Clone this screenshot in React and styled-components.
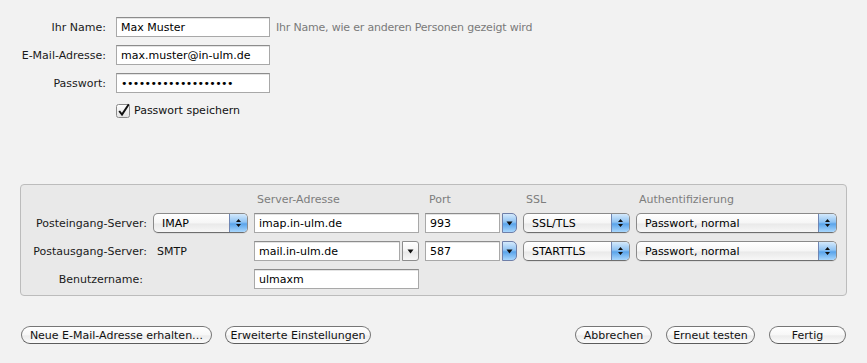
import React from 'react'
import styled, { createGlobalStyle } from 'styled-components'

const Global = createGlobalStyle`
  html, body {
    margin: 0;
    background: #f2f2f2;
  }
  body {
    font-family: "DejaVu Sans", "Noto Sans", sans-serif;
    font-size: 11px;
    color: #1a1a1a;
  }
`

const Page = styled.div`
  width: 867px;
  height: 363px;
  box-sizing: border-box;
  padding-top: 17px;
  overflow: hidden;
`

const Form = styled.section`
  display: grid;
  grid-template-columns: 110px 154px auto;
  grid-auto-rows: 20px;
  column-gap: 6px;
  row-gap: 8px;
  align-items: center;
`

const Label = styled.div`
  text-align: right;
  padding-right: ${p => p.$pad ?? 4}px;
  white-space: nowrap;
`

const Field = styled.div`
  box-sizing: border-box;
  height: 20px;
  background: #fff;
  border: 1px solid #a8a8a8;
  border-top-color: #8c8c8c;
  box-shadow: inset 0 1px 0 #e4e4e4;
  padding-left: 4px;
  display: flex;
  align-items: center;
  color: #000;
  white-space: nowrap;
  overflow: hidden;
  flex: 1;
  letter-spacing: ${p => p.$dots ? '-0.6px' : 'normal'};
`

const Hint = styled.div`
  color: #7a7a7a;
  white-space: nowrap;
  letter-spacing: -0.2px;
`

const CheckRow = styled.label`
  grid-column: 2 / span 2;
  display: flex;
  align-items: center;
  gap: 3px;
  margin-top: -2px;
  color: #111;
`

const Panel = styled.section`
  margin: 63px 20px 0 20px;
  border: 1px solid #bcbcbc;
  border-radius: 4px;
  background: #e9e9e9;
  padding: 9px 0 6px 0;
  display: grid;
  grid-template-columns: 126px 95px 165px 92px 107px 201px;
  grid-template-rows: 11px 20px 20px 20px;
  column-gap: 6px;
  row-gap: 8px;
  align-items: center;
`

const ColHead = styled.div`
  grid-column: ${p => p.$col};
  color: #7d7d7d;
  padding-left: ${p => p.$pad || 3}px;
  line-height: 11px;
  white-space: nowrap;
`

const Plain = styled.div`
  padding-left: 4px;
  color: #111;
`

const PopupBox = styled.div`
  box-sizing: border-box;
  height: 20px;
  display: flex;
  border: 1px solid #8a8a8a;
  border-bottom-color: #6e6e6e;
  border-radius: 5px;
  overflow: hidden;
  background: linear-gradient(#ffffff, #f6f6f6 50%, #e9e9e9 55%, #f7f7f7);
  box-shadow: 0 1px 0 rgba(0, 0, 0, 0.06);
`

const PopupText = styled.div`
  flex: 1;
  display: flex;
  align-items: center;
  padding-left: 8px;
  color: #000;
  white-space: nowrap;
`

const BlueKnob = styled.div`
  width: 17px;
  display: flex;
  align-items: center;
  justify-content: center;
  border-left: 1px solid #6f86b3;
  background: linear-gradient(#d4e9fc, #8fc3f3 45%, #5aa4ea 55%, #a9d7fd);
  svg { fill: #111; }
`

const ComboBox = styled.div`
  display: flex;
  height: 20px;
`

const ComboKnob = styled.div`
  box-sizing: border-box;
  width: ${p => p.$w}px;
  height: 20px;
  margin-left: 2px;
  display: flex;
  align-items: center;
  justify-content: center;
  border: 1px solid ${p => p.$blue ? '#6f7fa8' : '#8d8d8d'};
  border-radius: ${p => p.$blue ? '0 5px 5px 0' : '0 3px 3px 0'};
  background: ${p => p.$blue
    ? 'linear-gradient(#d4e9fc, #8fc3f3 45%, #5aa4ea 55%, #a9d7fd)'
    : 'linear-gradient(#ffffff, #f3f3f3 50%, #e8e8e8 55%, #f8f8f8)'};
  svg { fill: #111; }
`

const ButtonBar = styled.footer`
  display: flex;
  justify-content: space-between;
  margin: 30px 21px 0 21px;
`

const Group = styled.div`
  display: flex;
  gap: ${p => p.$gap}px;
`

const Button = styled.button`
  box-sizing: border-box;
  width: ${p => p.$w}px;
  height: 18px;
  padding: 0;
  border: 1px solid #767676;
  border-bottom-color: #5c5c5c;
  border-radius: 9px;
  background: linear-gradient(#ffffff, #f7f7f7 50%, #ececec 55%, #fbfbfb);
  font-family: inherit;
  font-size: 11px;
  color: #111;
  white-space: nowrap;
`

const UpDown = () =>
  <svg width="7" height="10" viewBox="0 0 7 10">
    <path d="M1 4 L3.5 1 L6 4 Z M1 6 L3.5 9 L6 6 Z" />
  </svg>

const Down = () =>
  <svg width="7" height="5" viewBox="0 0 7 5">
    <path d="M0.5 0.5 H6.5 L3.5 4.5 Z" />
  </svg>

const Check = () =>
  <svg width="15" height="15" viewBox="0 0 15 15">
    <defs>
      <linearGradient id="cb" x1="0" y1="0" x2="0" y2="1">
        <stop offset="0" stopColor="#ffffff" />
        <stop offset="1" stopColor="#e2e2e2" />
      </linearGradient>
    </defs>
    <rect x="0.5" y="1.5" width="13" height="13" rx="2" fill="url(#cb)" stroke="#8a8a8a" />
    <path d="M3.2 8 L6 11.5 L12.8 1.2" fill="none" stroke="#111" strokeWidth="2" />
  </svg>

const Popup = ({ children }) =>
  <PopupBox>
    <PopupText>{children}</PopupText>
    <BlueKnob><UpDown /></BlueKnob>
  </PopupBox>

const Combo = ({ value, blue }) =>
  <ComboBox>
    <Field>{value}</Field>
    <ComboKnob $blue={blue} $w={blue ? 15 : 17}><Down /></ComboKnob>
  </ComboBox>

const App = () =>
  <Page>
    <Global />
    <Form>
      <Label>Ihr Name:</Label>
      <Field>Max Muster</Field>
      <Hint>Ihr Name, wie er anderen Personen gezeigt wird</Hint>

      <Label>E-Mail-Adresse:</Label>
      <Field>max.muster@in-ulm.de</Field>
      <div />

      <Label>Passwort:</Label>
      <Field $dots>{'•'.repeat(19)}</Field>
      <div />

      <CheckRow><Check />Passwort speichern</CheckRow>
    </Form>

    <Panel>
      <ColHead $col={3}>Server-Adresse</ColHead>
      <ColHead $col={4} $pad={4}>Port</ColHead>
      <ColHead $col={5}>SSL</ColHead>
      <ColHead $col={6}>Authentifizierung</ColHead>

      <Label $pad={0}>Posteingang-Server:</Label>
      <Popup>IMAP</Popup>
      <Field>imap.in-ulm.de</Field>
      <Combo value="993" blue />
      <Popup>SSL/TLS</Popup>
      <Popup>Passwort, normal</Popup>

      <Label $pad={0}>Postausgang-Server:</Label>
      <Plain>SMTP</Plain>
      <Combo value="mail.in-ulm.de" />
      <Combo value="587" blue />
      <Popup>STARTTLS</Popup>
      <Popup>Passwort, normal</Popup>

      <Label $pad={4}>Benutzername:</Label>
      <div />
      <Field>ulmaxm</Field>
    </Panel>

    <ButtonBar>
      <Group $gap={13}>
        <Button $w={191}>Neue E-Mail-Adresse erhalten…</Button>
        <Button $w={146}>Erweiterte Einstellungen</Button>
      </Group>
      <Group $gap={14}>
        <Button $w={77}>Abbrechen</Button>
        <Button $w={89}>Erneut testen</Button>
        <Button $w={77}>Fertig</Button>
      </Group>
    </ButtonBar>
  </Page>

export default App
